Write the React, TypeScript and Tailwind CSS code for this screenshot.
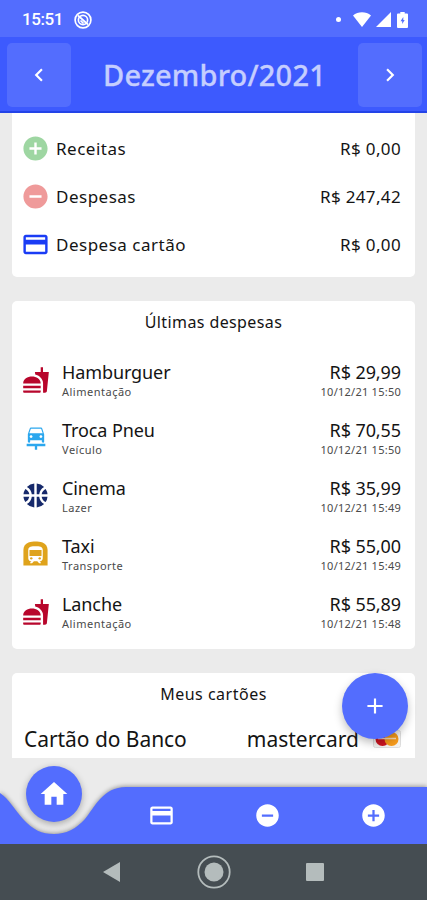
import type { ReactNode } from "react";
import { clsx } from "clsx";
import {
  MdAdd,
  MdAddCircle,
  MdCarRepair,
  MdChevronLeft,
  MdChevronRight,
  MdCreditCard,
  MdFastfood,
  MdHome,
  MdRemoveCircle,
  MdSportsBasketball,
  MdSubway,
} from "react-icons/md";

const summary = [
  { label: "Receitas", value: "R$ 0,00", icon: <MdAddCircle className="size-[29px] text-[#9ed6a2]" /> },
  { label: "Despesas", value: "R$ 247,42", icon: <MdRemoveCircle className="size-[29px] text-[#ef9a9a]" /> },
  { label: "Despesa cartão", value: "R$ 0,00", icon: <MdCreditCard className="size-[29px] text-[#1a3cf5]" /> },
];

const expenses = [
  { id: 1, name: "Hamburguer", category: "Alimentação", value: "R$ 29,99", date: "10/12/21 15:50", icon: <MdFastfood className="size-[28px] text-[#b8062c]" /> },
  { id: 2, name: "Troca Pneu", category: "Veículo", value: "R$ 70,55", date: "10/12/21 15:50", icon: <MdCarRepair className="size-[28px] text-[#2ba7ee]" /> },
  { id: 3, name: "Cinema", category: "Lazer", value: "R$ 35,99", date: "10/12/21 15:49", icon: <MdSportsBasketball className="size-[29px] text-[#16296b]" /> },
  { id: 4, name: "Taxi", category: "Transporte", value: "R$ 55,00", date: "10/12/21 15:49", icon: <MdSubway className="size-[29px] text-[#dfa31c]" /> },
  { id: 5, name: "Lanche", category: "Alimentação", value: "R$ 55,89", date: "10/12/21 15:48", icon: <MdFastfood className="size-[28px] text-[#b8062c]" /> },
];

function StatusBar() {
  return (
    <div className="flex h-[37px] shrink-0 items-center bg-[#536dfe] pt-0.5 pr-[19px] pl-[22px] text-white">
      <span className="w-[52px] font-[Roboto] text-[17px] font-medium tracking-[-0.4px]">15:51</span>
      <svg viewBox="0 0 18 18" className="size-[18px]" fill="none" stroke="currentColor">
        <circle cx="9" cy="9" r="7.9" strokeWidth="1.7" />
        <circle cx="9" cy="9" r="4.6" strokeWidth="1.7" />
        <path d="M4 4.5 14 13.5M6.5 9.5l3 3" strokeWidth="1.7" />
      </svg>
      <span className="mr-[12px] ml-auto size-[5px] rounded-full bg-white" />
      <svg viewBox="0 0 18 15" className="mr-[5px] h-[15px] w-[18px]" fill="currentColor">
        <path d="M9 15 0 3.4C5 -.8 13 -.8 18 3.4z" />
      </svg>
      <svg viewBox="0 0 15 15" className="mr-[6px] size-[15px]" fill="currentColor">
        <path d="M15 0v15H0z" />
      </svg>
      <svg viewBox="0 0 11 16" className="h-4 w-[11px]">
        <path d="M3.3 0h4.4v1.5H10q1 0 1 1V15q0 1-1 1H1q-1 0-1-1V2.500q0-1 1-1h2.300z" fill="currentColor" />
        <path d="M6.300 5 3.500 9.300h1.700V12L7.700 7.900H6.300z" fill="#536dfe" />
      </svg>
    </div>
  );
}

function MonthButton({ children }: { children: ReactNode }) {
  return (
    <button className="flex size-[64px] items-center justify-center rounded-[5px] bg-[#536dfe] text-white">
      {children}
    </button>
  );
}

function Card({ className, children }: { className?: string; children: ReactNode }) {
  return <section className={clsx("mx-[12px] bg-white", className)}>{children}</section>;
}

function BottomNav() {
  return (
    <nav className="relative h-[57px] shrink-0 text-white">
      {/* Bar with the dip under the selected tab */}
      <svg viewBox="0 0 427 57" className="absolute inset-0 h-[57px] w-[427px] overflow-visible drop-shadow-[0_-1px_2px_rgba(0,0,0,0.35)]">
        <path
          d="M0 6C9 12 15 23 23 32C33 43 42 47 54 47C66 47 76 42 85 32C95 20 103 0 126 0H427V57H0z"
          fill="#536dfe"
        />
      </svg>
      <button className="absolute top-[-21.5px] left-[25.5px] flex size-[56.500px] items-center justify-center rounded-full bg-[#536dfe] shadow-[0_2px_7px_rgba(0,0,0,0.3)]">
        <MdHome className="size-[32px]" />
      </button>
      <div className="relative ml-[108px] grid h-full grid-cols-3 place-items-center">
        <MdCreditCard className="size-[27px]" />
        <MdRemoveCircle className="size-[27px]" />
        <MdAddCircle className="size-[27px]" />
      </div>
    </nav>
  );
}

function SystemBar() {
  return (
    <div className="relative flex h-[56px] shrink-0 items-center bg-[#454d52] text-[#b4bcbc]">
      <svg viewBox="0 0 17 20" className="ml-[103px] h-[20px] w-[17px]" fill="currentColor">
        <path d="M17 0v20L0 10z" />
      </svg>
      <svg viewBox="0 0 34 34" className="ml-[77px] size-[34px]">
        <circle cx="17" cy="17" r="15.700" fill="none" stroke="currentColor" strokeWidth="1.800" />
        <circle cx="17" cy="17" r="9.500" fill="currentColor" />
      </svg>
      <span className="ml-[75px] size-[18px] rounded-[1px] bg-[#b4bcbc]" />
    </div>
  );
}

export default function App() {
  return (
    <div className="flex h-[900px] w-[427px] flex-col overflow-hidden bg-[#ebebeb] font-['Noto_Sans',sans-serif] text-[#141414]">
      <StatusBar />
      <header className="flex h-[76px] shrink-0 items-center justify-between border-b-2 border-[#2343e8] bg-[#3d5afe] pt-[2px] pr-[5px] pl-[7px]">
        <MonthButton>
          <MdChevronLeft className="size-[26px]" />
        </MonthButton>
        <h1 className="text-[29px] font-medium tracking-[0.2px] text-[#c5cefe] [-webkit-text-stroke:0.3px_#c5cefe]">Dezembro/2021</h1>
        <MonthButton>
          <MdChevronRight className="size-[26px]" />
        </MonthButton>
      </header>

      <main className="relative flex flex-1 flex-col">
        {/* Month summary */}
        <Card className="h-[164px] rounded-b-[5px] pt-[12px]">
          {summary.map((row) => (
            <div key={row.label} className="flex h-[48px] items-center pr-[14px] pl-[9px] text-[17px]">
              <span className="mb-px">{row.icon}</span>
              <span className="ml-[6px] tracking-[0.5px]">{row.label}</span>
              <span className="ml-auto tracking-[0.35px]">{row.value}</span>
            </div>
          ))}
        </Card>

        {/* Latest expenses */}
        <Card className="mt-[24px] h-[348px] rounded-[5px] pt-[10px]">
          <h2 className="text-center text-[16px] leading-[22px] tracking-[0.4px]">Últimas despesas</h2>
          <div className="mt-[19px]">
            {expenses.map((item) => (
              <div key={item.id} className="flex h-[58px] items-center pr-[14px] pl-[9px]">
                <span className="mb-[3px] flex w-[29px] justify-center">{item.icon}</span>
                <div className="ml-[12px] flex flex-col">
                  <span className="text-[18px] leading-[22px] tracking-[-0.1px]">{item.name}</span>
                  <span className="text-[11px] leading-[18px] tracking-[0.5px] text-[#4a4a4a]">{item.category}</span>
                </div>
                <div className="ml-auto flex flex-col text-right">
                  <span className="text-[18px] leading-[22px] tracking-[-0.1px]">{item.value}</span>
                  <span className="text-[11px] leading-[18px] tracking-[0.25px] text-[#4a4a4a]">{item.date}</span>
                </div>
              </div>
            ))}
          </div>
        </Card>

        {/* Cards */}
        <Card className="mt-[24px] h-[85px] rounded-t-[5px] pt-[10px]">
          <h2 className="text-center text-[16px] leading-[22px] tracking-[0.5px]">Meus cartões</h2>
          <div className="mt-[19px] flex items-center pr-[14px] pl-[12px] text-[21px] leading-[30px]">
            <span className="tracking-[-0.05px]">Cartão do Banco</span>
            <span className="ml-auto">mastercard</span>
            <svg viewBox="0 0 28 18" className="ml-[14px] h-[18px] w-[28px]">
              <rect x=".5" y=".5" width="27" height="17" rx="2" fill="#f3f1ee" stroke="#dddddd" />
              <circle cx="9.500" cy="9" r="7" fill="#cf1420" />
              <circle cx="18.500" cy="9" r="7" fill="#f59a1b" />
              <path d="M5 8.500h18" stroke="#f7d9b5" strokeWidth="1.500" />
            </svg>
          </div>
        </Card>

        <button className="absolute right-[19px] bottom-[48px] flex size-[66px] items-center justify-center rounded-full bg-[#536dfe] text-white shadow-[0_4px_8px_rgba(0,0,0,0.25)]">
          <MdAdd className="size-[26px]" />
        </button>
      </main>

      <BottomNav />
      <SystemBar />
    </div>
  );
}
